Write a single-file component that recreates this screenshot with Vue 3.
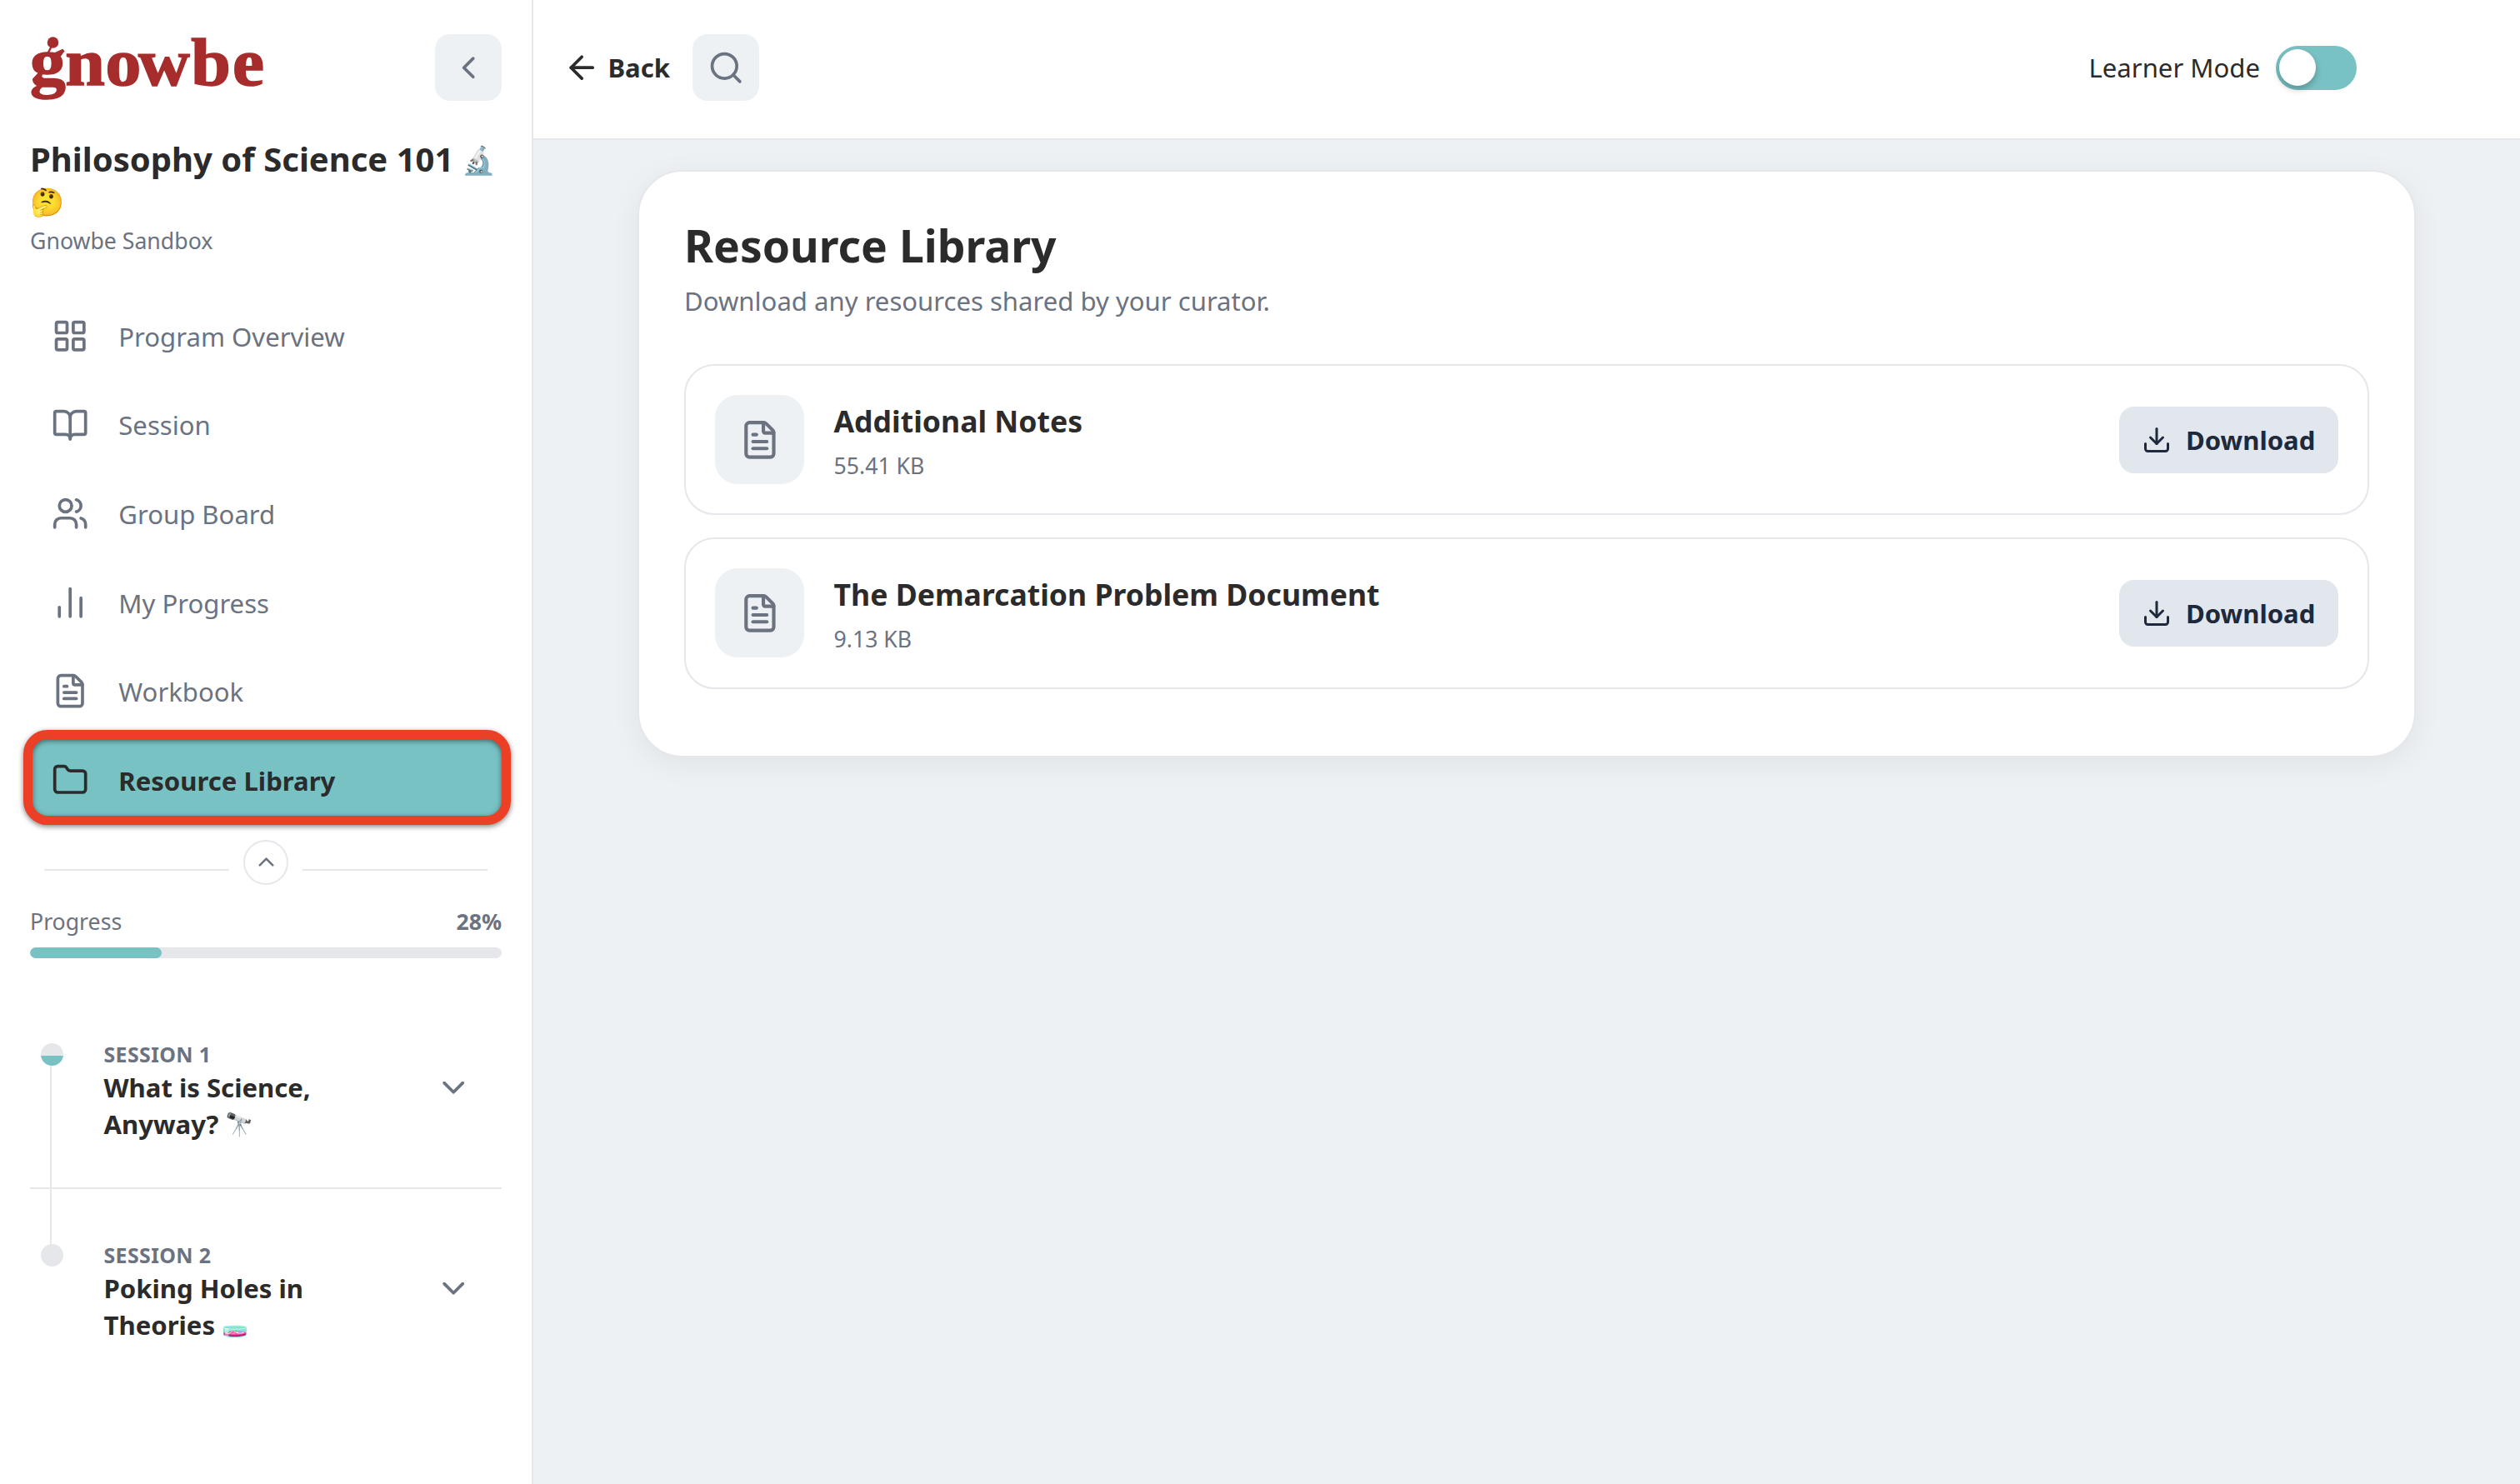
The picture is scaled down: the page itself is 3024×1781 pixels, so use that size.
<template>
  <div class="layout">
    <!-- Sidebar -->
    <aside class="sidebar">
      <div class="sidebar-head">
        <svg class="logo" width="290" height="90" viewBox="0 0 290 90" role="img" aria-label="gnowbe">
          <text x="0 39.5 84.5 121.5 180.5 227" y="66" transform="scale(1.07 1)">gnowbe</text>
          <circle cx="27.5" cy="15" r="6.8" />
          <path d="M25.5 20 20.5 30" />
        </svg>
        <button class="icon-btn" aria-label="Collapse">
          <svg class="icon icon-md" viewBox="0 0 24 24"><path d="m15 18-6-6 6-6" /></svg>
        </button>
      </div>

      <h2 class="program-title">Philosophy of Science 101 <span class="emoji">🔬</span><wbr /><span class="emoji">🤔</span></h2>
      <p class="program-org">Gnowbe Sandbox</p>

      <nav class="nav">
        <a v-for="item in navItems" :key="item.label" class="nav-item" :class="{ active: item.active }">
          <svg class="icon icon-md" viewBox="0 0 24 24">
            <path v-for="d in item.paths" :key="d" :d="d" />
          </svg>
          <span class="nav-label">{{ item.label }}</span>
        </a>
      </nav>

      <div class="divider">
        <span class="divider-line"></span>
        <button class="divider-btn" aria-label="Collapse menu">
          <svg class="icon icon-xs" viewBox="0 0 24 24"><path d="m18 15-6-6-6 6" /></svg>
        </button>
        <span class="divider-line"></span>
      </div>

      <div class="progress">
        <div class="progress-head">
          <span>Progress</span>
          <strong>{{ progress }}%</strong>
        </div>
        <div class="progress-track">
          <div class="progress-fill" :style="{ width: `${progress}%` }"></div>
        </div>
      </div>

      <div class="sessions">
        <div v-for="session in sessions" :key="session.label" class="session">
          <span class="session-dot" :class="{ started: session.started }"></span>
          <div class="session-text">
            <div class="session-label">{{ session.label }}</div>
            <div class="session-title">
              <div>{{ session.title[0] }}</div>
              <div>{{ session.title[1] }} <span class="emoji" :class="session.tint">{{ session.emoji }}</span></div>
            </div>
          </div>
          <svg class="icon icon-md session-chevron" viewBox="0 0 24 24"><path d="m6 9 6 6 6-6" /></svg>
        </div>
      </div>
    </aside>

    <!-- Main -->
    <div class="main">
      <header class="topbar">
        <button class="back-btn">
          <svg class="icon icon-md" viewBox="0 0 24 24">
            <path d="m12 19-7-7 7-7" />
            <path d="M19 12H5" />
          </svg>
          <span>Back</span>
        </button>
        <button class="icon-btn" aria-label="Search">
          <svg class="icon icon-md" viewBox="0 0 24 24">
            <circle cx="11" cy="11" r="8" />
            <path d="m21 21-4.34-4.34" />
          </svg>
        </button>
        <div class="mode">
          <span>Learner Mode</span>
          <span class="toggle"><span class="toggle-knob"></span></span>
        </div>
      </header>

      <main class="content">
        <section class="card">
          <h1>Resource Library</h1>
          <p class="card-sub">Download any resources shared by your curator.</p>
          <div class="resources">
            <div v-for="file in files" :key="file.name" class="resource">
              <div class="resource-icon">
                <svg class="icon icon-lg" viewBox="0 0 24 24">
                  <path v-for="d in fileText" :key="d" :d="d" />
                </svg>
              </div>
              <div class="resource-info">
                <div class="resource-name">{{ file.name }}</div>
                <div class="resource-size">{{ file.size }}</div>
              </div>
              <button class="download-btn">
                <svg class="icon icon-sm" viewBox="0 0 24 24">
                  <path d="M12 15V3" />
                  <path d="M21 15v4a2 2 0 0 1-2 2H5a2 2 0 0 1-2-2v-4" />
                  <path d="m7 10 5 5 5-5" />
                </svg>
                <span>Download</span>
              </button>
            </div>
          </div>
        </section>
      </main>
    </div>
  </div>
</template>

<script setup>
import { ref } from 'vue'

const progress = ref(28)

const fileText = [
  'M6 22a2 2 0 0 1-2-2V4a2 2 0 0 1 2-2h8a2.4 2.4 0 0 1 1.704.706l3.588 3.588A2.4 2.4 0 0 1 20 8v12a2 2 0 0 1-2 2z',
  'M14 2v5a1 1 0 0 0 1 1h5',
  'M10 9H8',
  'M16 13H8',
  'M16 17H8',
]

const navItems = [
  {
    label: 'Program Overview',
    paths: [
      'M4 3h5a1 1 0 0 1 1 1v5a1 1 0 0 1-1 1H4a1 1 0 0 1-1-1V4a1 1 0 0 1 1-1z',
      'M15 3h5a1 1 0 0 1 1 1v5a1 1 0 0 1-1 1h-5a1 1 0 0 1-1-1V4a1 1 0 0 1 1-1z',
      'M15 14h5a1 1 0 0 1 1 1v5a1 1 0 0 1-1 1h-5a1 1 0 0 1-1-1v-5a1 1 0 0 1 1-1z',
      'M4 14h5a1 1 0 0 1 1 1v5a1 1 0 0 1-1 1H4a1 1 0 0 1-1-1v-5a1 1 0 0 1 1-1z',
    ],
  },
  {
    label: 'Session',
    paths: [
      'M12 7v14',
      'M3 18a1 1 0 0 1-1-1V4a1 1 0 0 1 1-1h5a4 4 0 0 1 4 4 4 4 0 0 1 4-4h5a1 1 0 0 1 1 1v13a1 1 0 0 1-1 1h-6a3 3 0 0 0-3 3 3 3 0 0 0-3-3z',
    ],
  },
  {
    label: 'Group Board',
    paths: [
      'M16 21v-2a4 4 0 0 0-4-4H6a4 4 0 0 0-4 4v2',
      'M16 3.128a4 4 0 0 1 0 7.744',
      'M22 21v-2a4 4 0 0 0-3-3.87',
      'M5 7a4 4 0 1 0 8 0a4 4 0 1 0-8 0z',
    ],
  },
  { label: 'My Progress', paths: ['M5 21v-6', 'M12 21V3', 'M19 21V9'] },
  { label: 'Workbook', paths: fileText },
  {
    label: 'Resource Library',
    active: true,
    paths: [
      'M20 20a2 2 0 0 0 2-2V8a2 2 0 0 0-2-2h-7.9a2 2 0 0 1-1.69-.9L9.6 3.9A2 2 0 0 0 7.93 3H4a2 2 0 0 0-2 2v13a2 2 0 0 0 2 2Z',
    ],
  },
]

const sessions = [
  { label: 'SESSION 1', title: ['What is Science,', 'Anyway?'], emoji: '🔭', tint: 'gray', started: true },
  { label: 'SESSION 2', title: ['Poking Holes in', 'Theories'], emoji: '🧫', tint: 'pink', started: false },
]

const files = [
  { name: 'Additional Notes', size: '55.41 KB' },
  { name: 'The Demarcation Problem Document', size: '9.13 KB' },
]
</script>

<style>
body {
  margin: 0;
  overflow: hidden;
}
</style>

<style scoped>
.layout {
  display: flex;
  height: 1781px;
  background: #edf1f4;
  color: #2b2b2b;
  font-family: 'Noto Sans', 'Noto Color Emoji', sans-serif;
  font-size: 31.1px;
}

.layout * {
  box-sizing: border-box;
}

button {
  border: 0;
  padding: 0;
  background: none;
  color: inherit;
  font: inherit;
}

.emoji {
  font-size: 0.82em;
  line-height: 0;
  vertical-align: 2px;
}

.emoji.gray {
  font-size: 0.88em;
  filter: saturate(0.4);
}

.emoji.pink {
  filter: hue-rotate(-35deg);
}

/* Icons */
.icon {
  flex-shrink: 0;
  fill: none;
  stroke: currentColor;
  stroke-width: 2;
  stroke-linecap: round;
  stroke-linejoin: round;
}

.icon-xs {
  width: 31px;
  height: 31px;
}

.icon-sm {
  width: 36px;
  height: 36px;
}

.icon-md {
  width: 44.4px;
  height: 44.4px;
}

.icon-lg {
  width: 49.8px;
  height: 49.8px;
}

.icon-btn {
  display: flex;
  align-items: center;
  justify-content: center;
  width: 80px;
  height: 80px;
  border-radius: 18px;
  background: #edf1f4;
  color: #6b7280;
}

/* Sidebar */
.sidebar {
  flex-shrink: 0;
  width: 640px;
  padding: 36px 36px 0;
  background: #fff;
  border-right: 2px solid #e5e7eb;
}

.sidebar-head {
  display: flex;
  justify-content: space-between;
  height: 129.5px;
}

.sidebar-head .icon-btn {
  margin-top: 5px;
}

.logo {
  overflow: visible;
  fill: #a62d2c;
}

.logo text {
  font-family: 'Liberation Serif', serif;
  font-size: 80px;
  font-weight: 700;
  stroke: #a62d2c;
  stroke-width: 1.6;
}

.logo path {
  stroke: #a62d2c;
  stroke-width: 2.4;
}

.program-title {
  margin: 0;
  height: 100px;
  font-size: 40px;
  font-weight: 700;
  line-height: 50px;
}

.program-org {
  margin: 3px 0 0;
  color: #6b7280;
  font-size: 26.67px;
  line-height: 40px;
}

.nav {
  display: flex;
  flex-direction: column;
  margin-top: 41.5px;
}

.nav-item {
  display: flex;
  align-items: center;
  gap: 35.5px;
  height: 106.6px;
  padding-left: 26.4px;
  color: #6b7280;
}

.nav-label {
  padding-top: 1px;
}

.nav-item.active {
  position: relative;
  background: #79c2c4;
  border-radius: 20px;
  color: #2b2b2b;
  font-weight: 700;
}

/* Highlight ring over the active item */
.nav-item.active::after {
  content: '';
  position: absolute;
  top: -7px;
  right: -10.5px;
  bottom: 0;
  left: -8px;
  border: 11.5px solid #eb4026;
  border-radius: 29px;
  filter: drop-shadow(0 2px 3px rgba(0, 0, 0, 0.5));
}

.divider {
  display: flex;
  align-items: center;
  gap: 17px;
  margin: 18px 17px 0;
}

.divider-line {
  flex: 1;
  height: 2px;
  margin-top: 18px;
  background: #e5e7eb;
}

.divider-btn {
  display: flex;
  align-items: center;
  justify-content: center;
  width: 54px;
  height: 54px;
  border: 2px solid #e5e7eb;
  border-radius: 50%;
  color: #6b7280;
}

.progress {
  margin-top: 24.5px;
}

.progress-head {
  display: flex;
  justify-content: space-between;
  height: 50.5px;
  color: #6b7280;
  font-size: 26.67px;
  line-height: 40px;
}

.progress-track {
  height: 13px;
  border-radius: 7px;
  background: #e5e7eb;
  overflow: hidden;
}

.progress-fill {
  height: 100%;
  border-radius: 7px;
  background: #79c2c4;
}

.sessions {
  margin-top: 36px;
}

.session {
  position: relative;
  display: flex;
  height: 241px;
  padding: 61px 36px 0 13px;
}

.session:first-child {
  border-bottom: 2px solid #e5e7eb;
}

/* Timeline between the two dots */
.session:first-child::before {
  content: '';
  position: absolute;
  top: 90px;
  left: 24px;
  width: 2px;
  height: 220px;
  background: #e5e7eb;
}

.session-dot {
  position: relative;
  flex-shrink: 0;
  width: 27px;
  height: 27px;
  margin-top: 5.5px;
  border-radius: 50%;
  background: #e5e7eb;
}

.session-dot.started {
  background: linear-gradient(#e5e7eb 54%, #79c2c4 54%);
}

.session-text {
  width: 320px;
  padding: 1.5px 0 0 48.5px;
}

.session-label {
  color: #6b7280;
  font-size: 24.9px;
  font-weight: 700;
  letter-spacing: 0.4px;
  line-height: 35.3px;
}

.session-title {
  font-weight: 700;
  line-height: 44px;
}

.session-chevron {
  margin: 36px 0 0 auto;
  color: #6b7280;
}

/* Main */
.main {
  flex: 1;
  display: flex;
  flex-direction: column;
}

.topbar {
  display: flex;
  align-items: center;
  height: 168px;
  padding: 0 196px 4px 36px;
  background: #fff;
  border-bottom: 2px solid #e5e7eb;
}

.back-btn {
  display: flex;
  align-items: center;
  gap: 9px;
  width: 155px;
  font-weight: 700;
}

.mode {
  display: flex;
  align-items: center;
  gap: 19px;
  margin-left: auto;
}

.toggle {
  width: 97px;
  height: 53px;
  padding: 4px;
  border-radius: 27px;
  background: #79c2c4;
}

.toggle-knob {
  display: block;
  width: 44px;
  height: 44px;
  border-radius: 50%;
  background: #fff;
  box-shadow: 0 4px 8px rgba(0, 0, 0, 0.25);
}

.content {
  padding: 36px 125px 0;
}

.card {
  height: 705px;
  padding: 56.5px 54px 0;
  border: 2px solid #e5e7eb;
  border-radius: 54px;
  background: #fff;
  box-shadow: 0 8px 36px rgba(0, 0, 0, 0.06);
}

.card h1 {
  margin: 0;
  font-size: 53.4px;
  font-weight: 700;
  line-height: 64px;
}

.card-sub {
  margin: 10px 0 0;
  color: #6b7280;
  line-height: 48px;
}

.resources {
  display: flex;
  flex-direction: column;
  gap: 27px;
  margin-top: 52.5px;
}

.resource {
  display: flex;
  align-items: center;
  height: 181.3px;
  padding: 0 35px;
  border: 2px solid #e5e7eb;
  border-radius: 36px;
}

.resource-icon {
  display: flex;
  align-items: center;
  justify-content: center;
  width: 107px;
  height: 107px;
  border-radius: 27px;
  background: #edf1f4;
  color: #6b7280;
}

.resource-info {
  flex: 1;
  padding: 1.6px 0 0 35.5px;
}

.resource-name {
  font-size: 35.6px;
  font-weight: 700;
  line-height: 54px;
}

.resource-size {
  margin-top: 7px;
  color: #6b7280;
  font-size: 26.67px;
  line-height: 40px;
}

.download-btn {
  display: flex;
  align-items: center;
  gap: 17px;
  width: 263px;
  height: 80px;
  padding-left: 27px;
  border-radius: 18px;
  background: #e2e7ee;
  color: #1e293b;
  font-weight: 700;
}
</style>
